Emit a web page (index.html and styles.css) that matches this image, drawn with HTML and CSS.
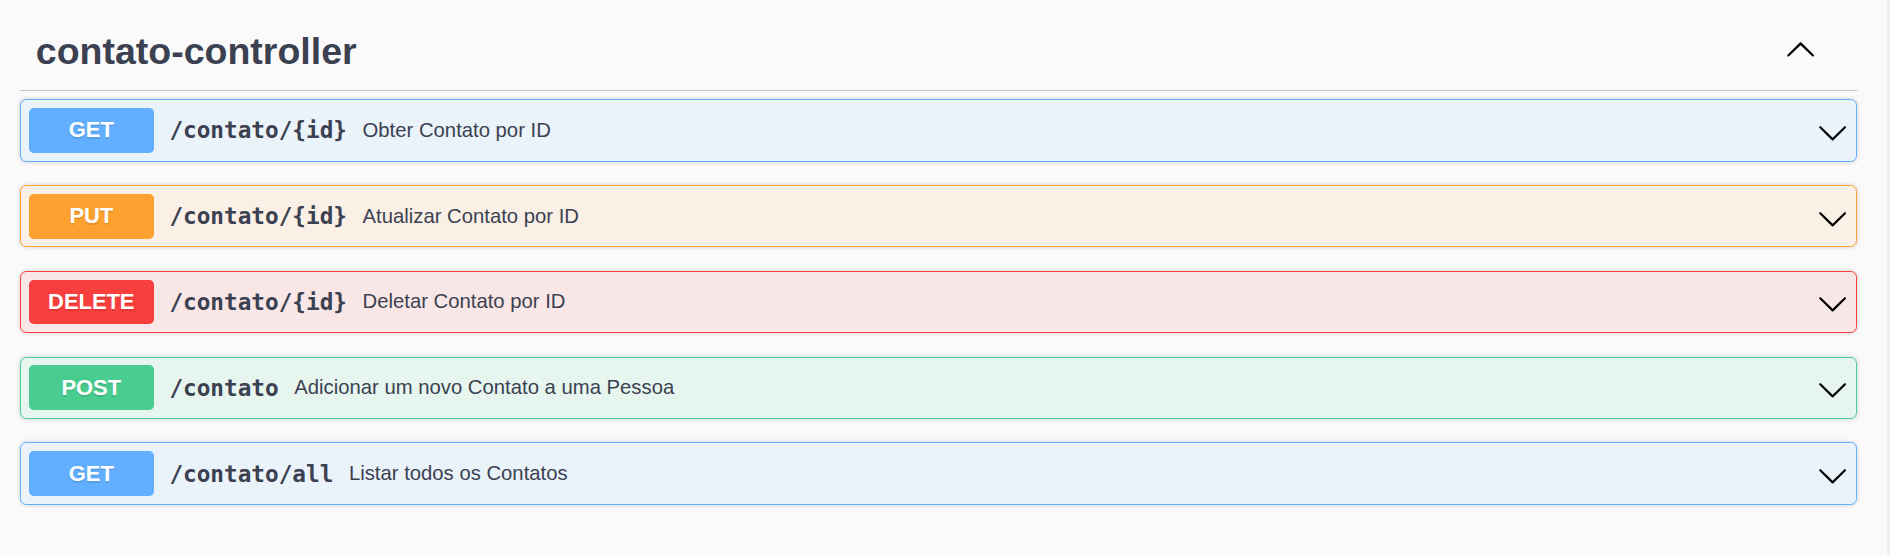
FILE: index.html
```html
<!DOCTYPE html>
<html lang="pt">
<head>
<meta charset="utf-8">
<title>contato-controller</title>
<link rel="stylesheet" href="styles.css">
</head>
<body>
<div class="page">
  <main class="main">
    <section class="tag-section">
      <h3 class="tag-header">
        <span class="tag-title">contato-controller</span>
        <span class="tag-arrow">
          <svg viewBox="0 0 20 20" class="arrow"><path d="M17.418 14.908c.272.268.709.268.979 0s.271-.701 0-.969l-7.908-7.83c-.27-.268-.707-.268-.979 0l-7.908 7.83c-.27.268-.27.701 0 .969.271.268.709.268.979 0L10 7.767l7.418 7.141z"/></svg>
        </span>
      </h3>

      <div class="op op-get">
        <div class="op-summary">
          <span class="method">GET</span>
          <span class="path">/contato/{id}</span>
          <span class="description">Obter Contato por ID</span>
          <span class="op-arrow"><svg viewBox="0 0 20 20" class="arrow"><path d="M17.418 6.109c.272-.268.709-.268.979 0s.271.701 0 .969l-7.908 7.83c-.27.268-.707.268-.979 0l-7.908-7.83c-.27-.268-.27-.701 0-.969.271-.268.709-.268.979 0L10 13.25l7.418-7.141z"/></svg></span>
        </div>
      </div>

      <div class="op op-put">
        <div class="op-summary">
          <span class="method">PUT</span>
          <span class="path">/contato/{id}</span>
          <span class="description">Atualizar Contato por ID</span>
          <span class="op-arrow"><svg viewBox="0 0 20 20" class="arrow"><path d="M17.418 6.109c.272-.268.709-.268.979 0s.271.701 0 .969l-7.908 7.83c-.27.268-.707.268-.979 0l-7.908-7.83c-.27-.268-.27-.701 0-.969.271-.268.709-.268.979 0L10 13.25l7.418-7.141z"/></svg></span>
        </div>
      </div>

      <div class="op op-delete">
        <div class="op-summary">
          <span class="method">DELETE</span>
          <span class="path">/contato/{id}</span>
          <span class="description">Deletar Contato por ID</span>
          <span class="op-arrow"><svg viewBox="0 0 20 20" class="arrow"><path d="M17.418 6.109c.272-.268.709-.268.979 0s.271.701 0 .969l-7.908 7.83c-.27.268-.707.268-.979 0l-7.908-7.83c-.27-.268-.27-.701 0-.969.271-.268.709-.268.979 0L10 13.25l7.418-7.141z"/></svg></span>
        </div>
      </div>

      <div class="op op-post">
        <div class="op-summary">
          <span class="method">POST</span>
          <span class="path">/contato</span>
          <span class="description">Adicionar um novo Contato a uma Pessoa</span>
          <span class="op-arrow"><svg viewBox="0 0 20 20" class="arrow"><path d="M17.418 6.109c.272-.268.709-.268.979 0s.271.701 0 .969l-7.908 7.83c-.27.268-.707.268-.979 0l-7.908-7.83c-.27-.268-.27-.701 0-.969.271-.268.709-.268.979 0L10 13.25l7.418-7.141z"/></svg></span>
        </div>
      </div>

      <div class="op op-get">
        <div class="op-summary">
          <span class="method">GET</span>
          <span class="path">/contato/all</span>
          <span class="description">Listar todos os Contatos</span>
          <span class="op-arrow"><svg viewBox="0 0 20 20" class="arrow"><path d="M17.418 6.109c.272-.268.709-.268.979 0s.271.701 0 .969l-7.908 7.83c-.27.268-.707.268-.979 0l-7.908-7.83c-.27-.268-.27-.701 0-.969.271-.268.709-.268.979 0L10 13.25l7.418-7.141z"/></svg></span>
        </div>
      </div>
    </section>
  </main>
  <div class="scroll-edge"></div>
</div>
</body>
</html>
```

FILE: styles.css
```css
html, body {
  margin: 0;
  padding: 0;
  background: #fafafa;
}

body {
  font-family: "Liberation Sans", Arial, sans-serif;
  color: #3b4151;
}

.page {
  display: flex;
  min-height: 556px;
}

.main {
  flex: 1;
  min-width: 0;
  padding: 14.2px 30px 0 20px;
}

.scroll-edge {
  width: 3px;
  background: #f0f0f0;
}

.tag-header {
  display: flex;
  align-items: flex-start;
  margin: 0 0 8.3px 0;
  padding: 15.6px 40.7px 17.2px 15.8px;
  border-bottom: 1px solid rgba(59, 65, 81, 0.3);
  font-weight: normal;
}

.tag-title {
  flex: 1;
  font-family: "Liberation Sans", Arial, sans-serif;
  font-weight: 700;
  font-size: 37.5px;
  line-height: 43px;
  color: #3b4151;
}

.tag-arrow {
  display: flex;
  margin-top: 3.7px;
}

.arrow {
  width: 31.25px;
  height: 31.25px;
  fill: #000;
  display: block;
}

.op {
  margin-bottom: 23.4px;
  border: 1px solid;
  border-radius: 6.25px;
  box-shadow: 0 0 4.7px rgba(0, 0, 0, 0.19);
}

.op-summary {
  display: flex;
  align-items: center;
  padding: 7.8px;
}

.method {
  min-width: 125px;
  padding: 9.4px 0;
  line-height: 26px;
  font-family: "Liberation Sans", Arial, sans-serif;
  font-weight: 700;
  font-size: 21.9px;
  color: #fff;
  text-align: center;
  border-radius: 4.7px;
  text-shadow: 0 1.5px 0 rgba(0, 0, 0, 0.1);
}

.path {
  padding: 0 15.6px;
  font-family: "DejaVu Sans Mono", "Liberation Mono", monospace;
  font-weight: 700;
  font-size: 22.7px;
  color: #3b4151;
  white-space: nowrap;
}

.description {
  flex: 1;
  font-family: "Liberation Sans", Arial, sans-serif;
  font-size: 20.3px;
  color: #3b4151;
}

.op-arrow {
  display: flex;
  margin-top: 4px;
}

.op-get {
  border-color: #61affe;
  background: rgba(97, 175, 254, 0.1);
}
.op-get .method { background: #61affe; }

.op-put {
  border-color: #fca130;
  background: rgba(252, 161, 48, 0.1);
}
.op-put .method { background: #fca130; }

.op-delete {
  border-color: #f93e3e;
  background: rgba(249, 62, 62, 0.1);
}
.op-delete .method { background: #f93e3e; }

.op-post {
  border-color: #49cc90;
  background: rgba(73, 204, 144, 0.1);
}
.op-post .method { background: #49cc90; }
```
